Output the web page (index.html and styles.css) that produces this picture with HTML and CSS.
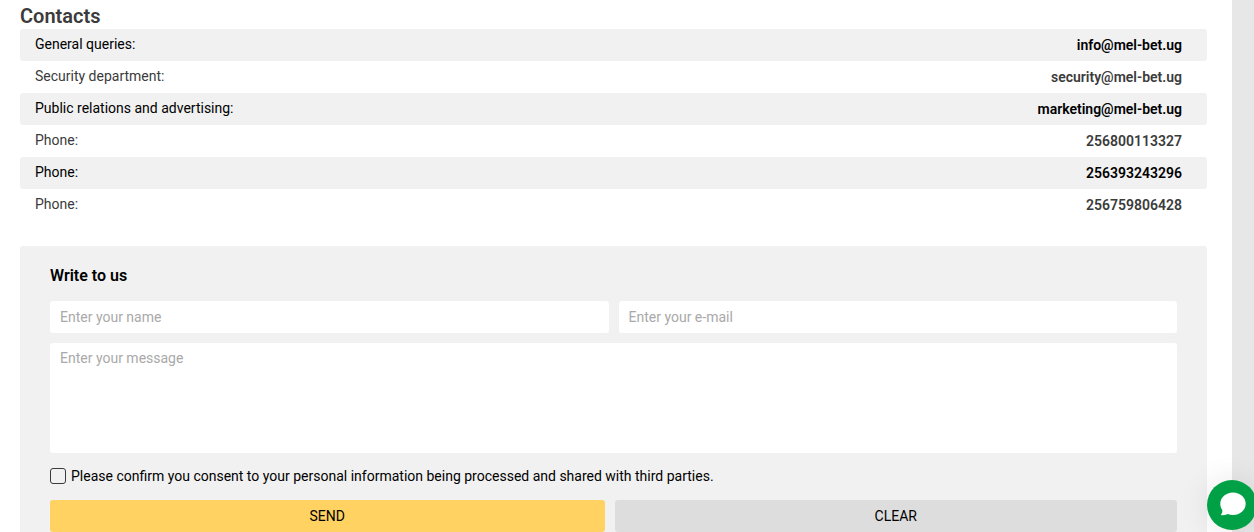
FILE: index.html
```html
<!DOCTYPE html>
<html lang="en">

<head>
    <meta charset="UTF-8">
    <meta name="viewport" content="width=device-width, initial-scale=1.0">
    <title>Contacts</title>
    <link rel="stylesheet" href="styles.css">
</head>

<body>
    <main class="page">
        <h1 class="page-title">Contacts</h1>

        <ul class="contacts">
            <li class="contact">
                <span>General queries:</span>
                <a class="contact-value" href="mailto:info@mel-bet.ug">info@mel-bet.ug</a>
            </li>
            <li class="contact">
                <span>Security department:</span>
                <a class="contact-value" href="mailto:security@mel-bet.ug">security@mel-bet.ug</a>
            </li>
            <li class="contact">
                <span>Public relations and advertising:</span>
                <a class="contact-value" href="mailto:marketing@mel-bet.ug">marketing@mel-bet.ug</a>
            </li>
            <li class="contact">
                <span>Phone:</span>
                <a class="contact-value" href="tel:256800113327">256800113327</a>
            </li>
            <li class="contact">
                <span>Phone:</span>
                <a class="contact-value" href="tel:256393243296">256393243296</a>
            </li>
            <li class="contact">
                <span>Phone:</span>
                <a class="contact-value" href="tel:256759806428">256759806428</a>
            </li>
        </ul>

        <form class="feedback">
            <h2 class="feedback-title">Write to us</h2>
            <div class="feedback-row">
                <input class="field" type="text" name="name" placeholder="Enter your name" aria-label="Enter your name">
                <input class="field" type="email" name="email" placeholder="Enter your e-mail" aria-label="Enter your e-mail">
            </div>
            <textarea class="field message" name="message" placeholder="Enter your message" aria-label="Enter your message"></textarea>
            <div class="consent">
                <input class="checkbox" type="checkbox" id="consent" name="consent">
                <label for="consent">Please confirm you consent to your personal information being processed and shared with third parties.</label>
            </div>
            <div class="buttons">
                <button class="btn btn-send" type="submit">SEND</button>
                <button class="btn" type="reset">CLEAR</button>
            </div>
        </form>
    </main>

    <button class="chat" type="button" aria-label="Open chat">
        <svg width="50" height="50" viewBox="0 0 50 50" aria-hidden="true">
            <path fill="#fff" d="M26 12.500c7.100 0 12.700 5 12.700 11.200S33.100 35 26 35c-1.900 0-3.600-.3-5.200-.9-2 .8-4 1.300-6.100 1.200-.8-.1-.9-.8-.4-1.300.9-1 1.300-2.400.9-4.200C13.900 28.100 13.300 26 13.300 23.700 13.300 17.500 18.900 12.500 26 12.500z" />
        </svg>
    </button>
</body>

</html>
```
FILE: styles.css
```css
* {
    box-sizing: border-box;
}

body {
    margin: 0;
    font-family: Roboto, Arial, sans-serif;
    font-size: 14px;
    line-height: 20px;
    color: #3b3b3b;
    background: #e7e7e7;
}

.page {
    margin-right: 22px;
    padding: 3px 25px 0 20px;
    background: #fff;
}

.page-title {
    margin: 0;
    font-size: 20px;
    line-height: 26px;
    font-weight: 600;
}

/* Contact list */
.contacts {
    margin: 0 0 25px;
    padding: 0;
    list-style: none;
}

.contact {
    display: flex;
    justify-content: space-between;
    padding: 5px 25px 5px 15px;
    border-radius: 3px;
}

.contact:nth-child(odd) {
    color: #000;
    background: #f1f1f1;
}

.contact-value {
    color: inherit;
    font-weight: 600;
    line-height: 22px;
    text-decoration: none;
}

/* Feedback form */
.feedback {
    padding: 20px 30px 0;
    color: #000;
    background: #f1f1f1;
    border-radius: 3px 3px 0 0;
}

.feedback-title {
    margin: 0 0 15px;
    font-size: 16px;
    line-height: 20px;
    font-weight: 600;
}

.feedback-row {
    display: grid;
    grid-template-columns: 1fr 1fr;
    gap: 10px;
    margin-bottom: 10px;
}

.field {
    width: 100%;
    height: 32px;
    padding: 0 10px;
    border: 0;
    border-radius: 3px;
    font: inherit;
    background: #fff;
}

.field::placeholder {
    color: #a9a9a9;
}

.message {
    display: block;
    height: 110px;
    padding: 5px 10px;
    resize: none;
}

.consent {
    display: flex;
    align-items: center;
    gap: 5px;
    margin: 13px 0 14px;
}

.checkbox {
    appearance: none;
    width: 16px;
    height: 16px;
    margin: 0;
    border: 1px solid #3b3b3b;
    border-radius: 3px;
}

.checkbox:checked {
    background: #ffd261;
}

.buttons {
    display: grid;
    grid-template-columns: calc(50% - 9px) 1fr;
    gap: 10px;
}

.btn {
    height: 32px;
    padding: 0;
    border: 0;
    border-radius: 3px;
    font: inherit;
    color: #000;
    background: #ddd;
    cursor: pointer;
}

.btn-send {
    background: #ffd261;
}

/* Chat launcher */
.chat {
    position: fixed;
    right: -3px;
    bottom: 2px;
    width: 50px;
    height: 50px;
    padding: 0;
    border: 0;
    border-radius: 50%;
    background: #00a146;
    box-shadow: 0 0 30px rgba(0, 0, 0, 0.1);
    cursor: pointer;
}

.chat svg {
    display: block;
}
```
